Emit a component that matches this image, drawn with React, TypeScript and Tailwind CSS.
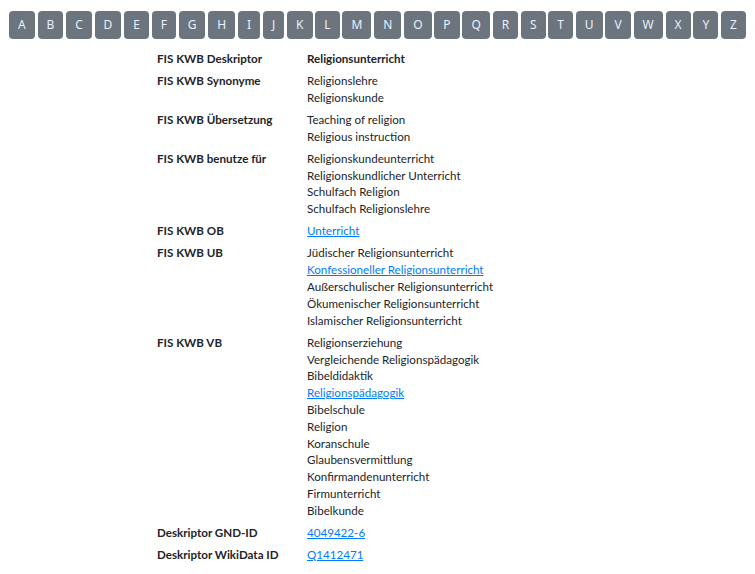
import React from 'react';

const letters = 'ABCDEFGHIJKLMNOPQRSTUVWXYZ'.split('');

type Val = { text: string; link?: boolean };

const rows: { label: string; values: Val[]; bold?: boolean }[] = [
  { label: 'FIS KWB Deskriptor', values: [{ text: 'Religionsunterricht' }], bold: true },
  { label: 'FIS KWB Synonyme', values: [{ text: 'Religionslehre' }, { text: 'Religionskunde' }] },
  { label: 'FIS KWB Übersetzung', values: [{ text: 'Teaching of religion' }, { text: 'Religious instruction' }] },
  {
    label: 'FIS KWB benutze für',
    values: [
      { text: 'Religionskundeunterricht' },
      { text: 'Religionskundlicher Unterricht' },
      { text: 'Schulfach Religion' },
      { text: 'Schulfach Religionslehre' },
    ],
  },
  { label: 'FIS KWB OB', values: [{ text: 'Unterricht', link: true }] },
  {
    label: 'FIS KWB UB',
    values: [
      { text: 'Jüdischer Religionsunterricht' },
      { text: 'Konfessioneller Religionsunterricht', link: true },
      { text: 'Außerschulischer Religionsunterricht' },
      { text: 'Ökumenischer Religionsunterricht' },
      { text: 'Islamischer Religionsunterricht' },
    ],
  },
  {
    label: 'FIS KWB VB',
    values: [
      { text: 'Religionserziehung' },
      { text: 'Vergleichende Religionspädagogik' },
      { text: 'Bibeldidaktik' },
      { text: 'Religionspädagogik', link: true },
      { text: 'Bibelschule' },
      { text: 'Religion' },
      { text: 'Koranschule' },
      { text: 'Glaubensvermittlung' },
      { text: 'Konfirmandenunterricht' },
      { text: 'Firmunterricht' },
      { text: 'Bibelkunde' },
    ],
  },
  { label: 'Deskriptor GND-ID', values: [{ text: '4049422-6', link: true }] },
  { label: 'Deskriptor WikiData ID', values: [{ text: 'Q1412471', link: true }] },
];

export default function App() {
  return (
    <div className="min-h-screen bg-white text-[#212529] font-['Lato',sans-serif] text-[11.6px] leading-[16.8px]">
      {/* Alphabet-Navigation */}
      <div className="flex justify-between px-[9px] pt-[11px]">
        {letters.map((l) => (
          <a
            key={l}
            href="#"
            className="flex h-[28px] items-center justify-center rounded-[4px] bg-[#6c757d] px-[9px] font-['Noto_Sans',sans-serif] text-[12px] text-[#e8f0ff]"
          >
            {l}
          </a>
        ))}
      </div>

      {/* Deskriptor-Tabelle */}
      <div className="mx-auto mt-[12px] w-[441px]">
        {rows.map((r) => (
          <div key={r.label} className="flex pb-[5.3px]">
            <div className="w-[150px] shrink-0 font-bold">{r.label}</div>
            <div className="flex flex-col">
              {r.values.map((v) =>
                v.link ? (
                  <a key={v.text} href="#" className="text-[#007bff] underline">
                    {v.text}
                  </a>
                ) : (
                  <span key={v.text} className={r.bold ? 'font-bold' : ''}>
                    {v.text}
                  </span>
                )
              )}
            </div>
          </div>
        ))}
      </div>
    </div>
  );
}
